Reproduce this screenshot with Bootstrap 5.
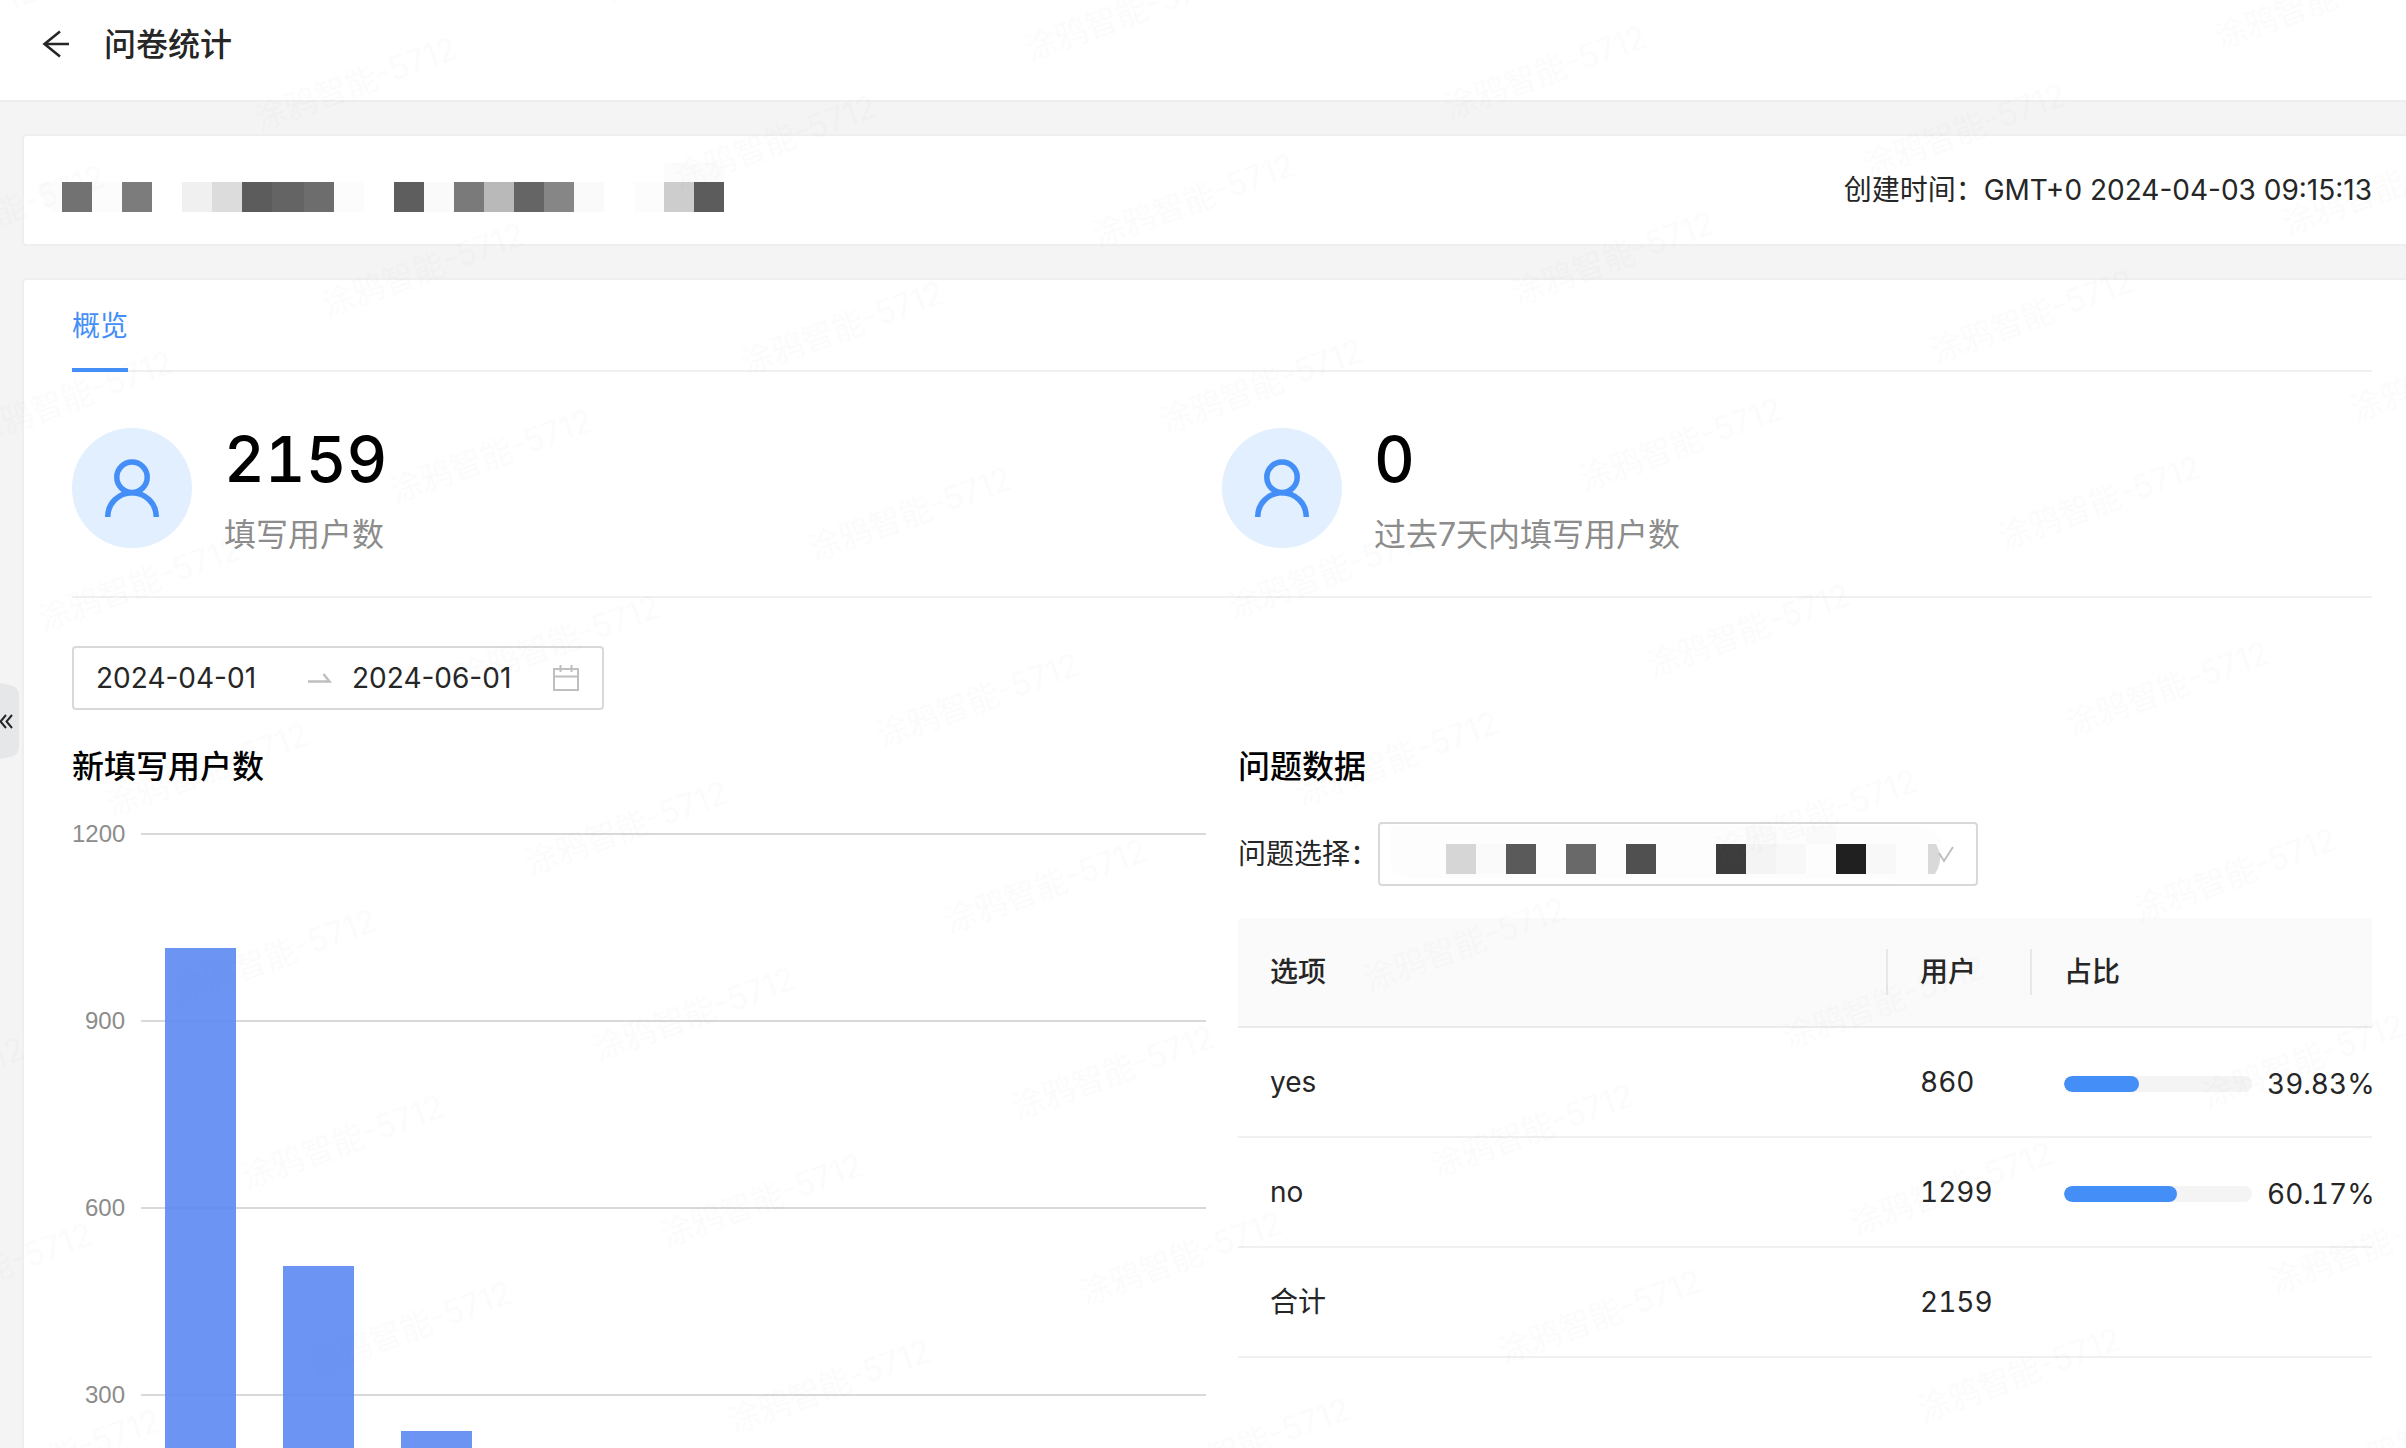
<!DOCTYPE html>
<html lang="zh-CN">
<head>
<meta charset="utf-8">
<meta name="viewport" content="width=device-width, initial-scale=1">
<title>问卷统计</title>
<link href="https://cdn.jsdelivr.net/npm/bootstrap@5.3.0/dist/css/bootstrap.min.css" rel="stylesheet">
<style>
  body { font-family: Inter, "Noto Sans CJK SC", sans-serif; font-size: 28px; line-height: 44px; color: #262626; background: #f4f4f4; }
  svg { display: block; }
  .page-head { padding: 21px 40px 31px; border-bottom: 2px solid #eee; gap: 32px; line-height: 48px; }
  .page-title { font-size: 32px; line-height: 48px; font-weight: 500; margin: 0; }
  .page-main { padding: 32px 0 0 22px; }
  .panel { background: #fff; border: 2px solid #efefef; border-right: 0; border-radius: 4px 0 0 4px; }
  .info-panel { padding: 26px 34px 32px 16px; margin-bottom: 32px; }
  .data-panel { padding: 24px 34px 0 48px; border-bottom: 0; }
  .tab-strip { border-bottom: 2px solid #f0f0f0; }
  .tab-strip .tab-link { display: block; color: #448ef7; text-decoration: none; padding-bottom: 20px; border-bottom: 4px solid #448ef7; margin-bottom: -2px; }
  .stats { padding: 47px 0 39px; border-bottom: 2px solid #f0f0f0; margin-bottom: 48px; }
  .stat { gap: 32px; }
  .stat-disc { width: 120px; height: 120px; border-radius: 50%; background: #e1effe; }
  .stat-value { font-size: 63px; line-height: 64px; font-weight: 500; color: #000; padding-top: 8px; margin-bottom: 22px; font-variant-numeric: tabular-nums; }
  .stat-label { font-size: 32px; line-height: 44px; color: #8c8c8c; }
  .range-box { width: 532px; height: 64px; border: 2px solid #d9d9d9; border-radius: 4px; padding: 0 22px; background: #fff; }
  .range-box input { width: 188px; border: 0; padding: 0; outline: 0; background: none; color: #262626; }
  .range-arrow { margin: 0 20px 0 24px; }
  .block-title { font-size: 32px; line-height: 48px; font-weight: 500; color: #000; margin: 33px 0 31px; }
  .split { --bs-gutter-x: 32px; }
  .chart { margin-top: -2px; }
  .tick { height: 187px; gap: 16px; font: 24px/28px "Liberation Sans", sans-serif; color: #8c8c8c; }
  .tick span { width: 53px; text-align: right; }
  .tick i { flex: 1; height: 2px; margin-top: 13px; background: #d9d9d9; }
  .bars { left: 69px; right: 0; top: 14px; height: 748px; }
  .band { flex: 1; height: 100%; }
  .band div { width: 60%; background: rgba(91,136,242,.9); }
  .question select { appearance: none; width: 600px; height: 64px; border: 2px solid #d9d9d9; border-radius: 4px; background: #fff; display: block; }
  .select-cover { left: 0; top: 0; pointer-events: none; }
  .answers { margin: 32px 0 0; table-layout: fixed; border-collapse: separate; border-spacing: 0; font-variant-numeric: tabular-nums; --bs-table-bg: transparent; }
  .answers th, .answers td { height: 110px; padding: 0 0 0 32px; border-bottom: 2px solid #f0f0f0; vertical-align: middle; color: #262626; }
  .answers thead th { background: #fafafa; font-weight: 500; border-bottom-color: #ebebeb; }
  .answers thead th:not(:last-child) { background: linear-gradient(#e8e8e8, #e8e8e8) right center / 2px 46px no-repeat #fafafa; }
  .answers thead th:first-child { border-top-left-radius: 4px; }
  .answers thead th:last-child { border-top-right-radius: 4px; }
  .col-users { width: 144px; }
  .col-share { width: 340px; }
  .share { gap: 15px; padding-top: 4px; }
  .share .progress { flex: none; width: 188px; height: 16px; border-radius: 8px; background: #f4f4f4; }
  .share .progress-bar { background: #448ef7; border-radius: 8px; }
  .side-handle { left: 0; top: 682px; width: 19px; height: 78px; border: 0; padding: 0; background: none; }
  .watermark { inset: 0; width: 100%; height: 100%; pointer-events: none; z-index: 20; }
  .watermark text { font-size: 32px; fill: #808080; fill-opacity: .032; }
</style>
<script src="https://cdn.jsdelivr.net/npm/bootstrap@5.3.0/dist/js/bootstrap.bundle.min.js"></script>
</head>
<body class="vh-100 overflow-hidden">

<header class="page-head bg-white d-flex align-items-center">
  <a href="#" aria-label="返回">
    <svg width="32" height="32" viewBox="0 0 32 32" fill="none" stroke="#262626" stroke-width="2.600"><path d="M29 15H4.500M20 2.500L4.500 15L20 27.500"/></svg>
  </a>
  <h1 class="page-title">问卷统计</h1>
</header>

<main class="page-main">
  <section class="panel info-panel d-flex justify-content-between align-items-end">
    <svg width="684" height="50" viewBox="40 162 684 50" shape-rendering="crispEdges" role="img" aria-label="问卷名称">
      <path fill="#fcfcfc" d="M62 182H42L40 190L46 206L56 212H62zM92 182h30v30h-30zM334 182h30v30h-30zM634 182h30v30h-30zM664 163h60v19h-60z"/>
      <path fill="#fafafa" d="M424 182h30v30h-30zM574 182h30v30h-30z"/>
      <path fill="#727272" d="M62 182h30v30h-30z"/><path fill="#7c7c7c" d="M122 182h30v30h-30z"/>
      <path fill="#f0f0f0" d="M182 182h30v30h-30z"/><path fill="#dcdcdc" d="M212 182h30v30h-30z"/>
      <path fill="#5c5c5c" d="M242 182h30v30h-30z"/><path fill="#646464" d="M272 182h32v30h-32z"/>
      <path fill="#6d6d6d" d="M304 182h30v30h-30z"/><path fill="#5e5e5e" d="M394 182h30v30h-30z"/>
      <path fill="#7a7a7a" d="M454 182h30v30h-30z"/><path fill="#b9b9b9" d="M484 182h30v30h-30z"/>
      <path fill="#656565" d="M514 182h30v30h-30z"/><path fill="#868686" d="M544 182h30v30h-30z"/>
      <path fill="#cdcdcd" d="M664 182h30v30h-30z"/><path fill="#5c5c5c" d="M694 182h30v30h-30z"/>
    </svg>
    <div>创建时间：GMT+0 2024-04-03 09:15:13</div>
  </section>

  <section class="panel data-panel">
    <nav class="tab-strip d-flex"><a class="tab-link" href="#" aria-current="page">概览</a></nav>

    <div class="stats row g-0">
      <div class="col-6 stat d-flex align-items-center">
        <div class="stat-disc d-flex align-items-center justify-content-center">
          <svg width="60" height="60" viewBox="0 0 60 60" fill="none" stroke="#448ef7" stroke-width="5.500"><circle cx="30" cy="19.200" r="15.200"/><path d="M5.700 59a24.300 24.300 0 0 1 48.600 0"/></svg>
        </div>
        <div><div class="stat-value">2159</div><div class="stat-label">填写用户数</div></div>
      </div>
      <div class="col-6 stat d-flex align-items-center">
        <div class="stat-disc d-flex align-items-center justify-content-center">
          <svg width="60" height="60" viewBox="0 0 60 60" fill="none" stroke="#448ef7" stroke-width="5.500"><circle cx="30" cy="19.200" r="15.200"/><path d="M5.700 59a24.300 24.300 0 0 1 48.600 0"/></svg>
        </div>
        <div><div class="stat-value">0</div><div class="stat-label">过去7天内填写用户数</div></div>
      </div>
    </div>

    <div class="range-box d-flex align-items-center">
      <input type="text" value="2024-04-01" aria-label="开始日期">
      <svg class="range-arrow" width="24" height="24" viewBox="0 0 24 24" fill="none" stroke="#bfbfbf" stroke-width="2.400"><path d="M0 15.500H21.500L15.500 8"/></svg>
      <input type="text" value="2024-06-01" aria-label="结束日期">
      <svg class="ms-auto" width="28" height="28" viewBox="0 0 28 28" fill="none" stroke="#bfbfbf" stroke-width="2"><path d="M2 5H26V26H2zM2 12.500H26M8.500 1V8M19.500 1V8"/></svg>
    </div>

    <div class="row split">
      <div class="col-6">
        <h2 class="block-title">新填写用户数</h2>
        <div class="chart position-relative">
          <div class="tick d-flex"><span>1200</span><i></i></div>
          <div class="tick d-flex"><span>900</span><i></i></div>
          <div class="tick d-flex"><span>600</span><i></i></div>
          <div class="tick d-flex"><span>300</span><i></i></div>
          <div class="tick d-flex"><span>0</span><i></i></div>
          <div class="bars position-absolute d-flex">
            <div class="band d-flex align-items-end justify-content-center"><div style="height:84.7%"></div></div>
            <div class="band d-flex align-items-end justify-content-center"><div style="height:42.3%"></div></div>
            <div class="band d-flex align-items-end justify-content-center"><div style="height:20.2%"></div></div>
            <div class="band"></div><div class="band"></div><div class="band"></div>
            <div class="band"></div><div class="band"></div><div class="band"></div>
          </div>
        </div>
      </div>

      <div class="col-6">
        <h2 class="block-title">问题数据</h2>
        <div class="question d-flex align-items-center">
          <label for="question">问题选择：</label>
          <div class="position-relative">
            <select id="question"><option></option></select>
            <svg class="select-cover position-absolute" width="600" height="64" viewBox="0 0 600 64">
              <path fill="#fdfdfd" d="M12 8q0-4 8-4H540q24 4 24 22q0 34-32 34L500 56H30Q12 52 12 40z"/>
              <g shape-rendering="crispEdges">
                <path fill="#d6d6d6" d="M68 22h30v30h-30z"/><path fill="#fafafa" d="M98 22h30v30h-30zM368 4h30v18h-30zM428 4h30v18h-30z"/>
                <path fill="#5a5a5a" d="M128 22h30v30h-30z"/><path fill="#696969" d="M188 22h30v30h-30z"/>
                <path fill="#505050" d="M248 22h30v30h-30z"/><path fill="#3c3c3c" d="M338 22h30v30h-30z"/>
                <path fill="#f4f4f4" d="M368 22h30v30h-30z"/><path fill="#f8f8f8" d="M398 22h30v30h-30zM488 22h30v30h-30z"/>
                <path fill="#202020" d="M458 22h30v30h-30z"/>
              </g>
              <path fill="#d9d9d9" d="M550 22h8q5 9 4 17q-1 7-5 13h-7z"/>
              <path fill="none" stroke="#bfbfbf" stroke-width="2" d="M561 31l5 8L575 25"/>
            </svg>
          </div>
        </div>

        <table class="table answers">
          <colgroup><col><col class="col-users"><col class="col-share"></colgroup>
          <thead><tr><th scope="col">选项</th><th scope="col">用户</th><th scope="col">占比</th></tr></thead>
          <tbody>
            <tr><td>yes</td><td>860</td><td><div class="share d-flex align-items-center"><div class="progress" role="progressbar" aria-label="yes 占比" aria-valuenow="39.83" aria-valuemin="0" aria-valuemax="100"><div class="progress-bar" style="width:39.83%"></div></div>39.83%</div></td></tr>
            <tr><td>no</td><td>1299</td><td><div class="share d-flex align-items-center"><div class="progress" role="progressbar" aria-label="no 占比" aria-valuenow="60.17" aria-valuemin="0" aria-valuemax="100"><div class="progress-bar" style="width:60.17%"></div></div>60.17%</div></td></tr>
            <tr><td>合计</td><td>2159</td><td></td></tr>
          </tbody>
        </table>
      </div>
    </div>
  </section>
</main>

<button class="side-handle position-fixed" type="button" aria-label="展开侧栏">
  <svg width="19" height="78" viewBox="0 0 19 78" fill="none"><path fill="#e6e7e9" d="M0 1L12 3.500Q19 6 19 14V64Q19 72 12 74.500L0 77z"/><path stroke="#262626" stroke-width="2" d="M6 33L0.500 39.500L6 46M12 33L6.500 39.500L12 46"/></svg>
</button>

<svg class="watermark position-fixed" aria-hidden="true">
  <defs><pattern id="wm" width="374" height="198" patternUnits="userSpaceOnUse" patternTransform="translate(220 81) rotate(-20)"><text x="20" y="60">涂鸦智能-5712</text></pattern></defs>
  <rect width="100%" height="100%" fill="url(#wm)"/>
</svg>
</body>
</html>
